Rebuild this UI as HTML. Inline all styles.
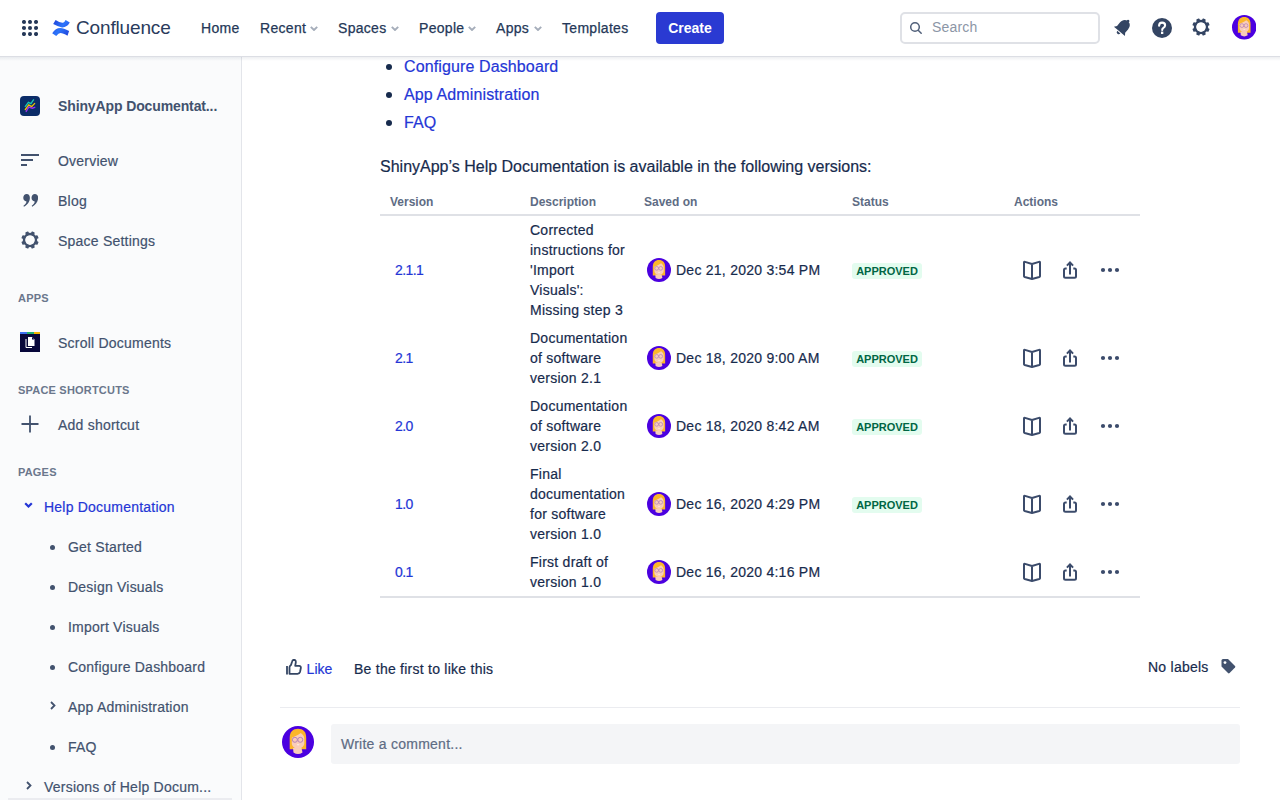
<!DOCTYPE html>
<html><head><meta charset="utf-8">
<style>
*{box-sizing:border-box;margin:0;padding:0}
html,body{width:1280px;height:800px;overflow:hidden;background:#fff;font-family:"Liberation Sans",sans-serif;color:#172b4d}
.abs{position:absolute}
#hdr{position:absolute;left:0;top:0;width:1280px;height:57px;background:#fff;border-bottom:1px solid #dcdee4;z-index:5}
#shd{position:absolute;left:0;top:57px;width:1280px;height:4px;background:linear-gradient(rgba(9,30,66,0.07),rgba(9,30,66,0));z-index:4}
.nav{position:absolute;top:0;height:56px;line-height:56px;font-size:14px;color:#253858;white-space:nowrap;letter-spacing:0.3px;-webkit-text-stroke:0.25px #253858}
.chev{position:absolute;top:26px}
#side{position:absolute;left:0;top:57px;width:242px;height:743px;background:#fafbfc;border-right:1px solid #e3e5ea}
.si{position:absolute;left:58px;font-size:14px;color:#42526e;white-space:nowrap;line-height:20px;letter-spacing:0.22px;-webkit-text-stroke:0.2px #42526e}
.sh{position:absolute;left:18px;font-size:11px;font-weight:bold;color:#6b778c;letter-spacing:0.2px;line-height:14px;margin-top:-1px}
.pg{position:absolute;left:68px;font-size:14px;color:#42526e;white-space:nowrap;line-height:20px;letter-spacing:0.22px;-webkit-text-stroke:0.2px #42526e}
.dot{position:absolute;left:49.7px;width:5px;height:5px;border-radius:50%;background:#42526e}
.lk{color:#2436d6 !important;-webkit-text-stroke-color:#2436d6 !important}
.vn{letter-spacing:-0.6px !important}
.dot2{position:absolute;left:386px;width:6px;height:6px;border-radius:3px;background:#172b4d}
.ml{position:absolute;left:404px;font-size:16px;line-height:24px;white-space:nowrap;letter-spacing:0.12px;-webkit-text-stroke:0.2px currentColor}
.th{position:absolute;font-size:12px;font-weight:bold;color:#5e6c84;line-height:16px;white-space:nowrap}
.td{position:absolute;font-size:14px;line-height:20px;color:#172b4d;white-space:nowrap;letter-spacing:0.25px;-webkit-text-stroke:0.2px currentColor}
.badge{position:absolute;width:70px;height:16px;background:#e3fcef;color:#006644;border-radius:3px;font-size:11px;font-weight:bold;line-height:16px;text-align:center}

</style></head><body>
<div id="hdr">
  <!-- grid icon -->
  <svg class="abs" style="left:22px;top:20px" width="16" height="16" viewBox="0 0 16 16"><g fill="#253858">
  <circle cx="2" cy="2" r="2.05"/><circle cx="8" cy="2" r="2.05"/><circle cx="14" cy="2" r="2.05"/>
  <circle cx="2" cy="8" r="2.05"/><circle cx="8" cy="8" r="2.05"/><circle cx="14" cy="8" r="2.05"/>
  <circle cx="2" cy="14" r="2.05"/><circle cx="8" cy="14" r="2.05"/><circle cx="14" cy="14" r="2.05"/></g></svg>
  <!-- confluence logo -->
  <svg class="abs" style="left:48px;top:14px" width="28" height="28" viewBox="48 14 28 28"><defs>
  <linearGradient id="lg1" x1="0" y1="0" x2="1" y2="0.4"><stop offset="0" stop-color="#1f3fd6"/><stop offset="0.75" stop-color="#2d75fb"/><stop offset="1" stop-color="#2a62ef"/></linearGradient>
  <linearGradient id="lg2" x1="1" y1="1" x2="0" y2="0.6"><stop offset="0" stop-color="#1f3fd6"/><stop offset="0.75" stop-color="#2d75fb"/><stop offset="1" stop-color="#2a62ef"/></linearGradient></defs>
  <path d="M55.6 20.0 Q61 23.6 63.5 22.6 Q64.5 22 65.6 20.0 L69.8 22.6 Q67 27.6 62 27.4 Q58.5 27 53.2 24.1 Z" fill="url(#lg1)"/>
  <path d="M52.2 33.3 Q55.5 28 60.3 28 Q63.5 28 69.1 31.1 L67.5 35.8 Q63 33 60.5 33 Q58.5 33.3 56.2 35.9 Z" fill="url(#lg2)"/>
  </svg>
  <div class="abs" style="left:76px;top:0;height:56px;line-height:56px;font-size:19px;color:#2a3b5c;letter-spacing:-0.15px">Confluence</div>
  <div class="nav" style="left:201px">Home</div>
  <div class="nav" style="left:260px">Recent <svg class="chev" style="left:50px" width="8" height="5" viewBox="0 0 8 5"><path d="M0.8 0.8 L4 4 L7.2 0.8" stroke="#a5adba" stroke-width="1.9" fill="none"/></svg></div>
  <div class="nav" style="left:338px">Spaces <svg class="chev" style="left:53px" width="8" height="5" viewBox="0 0 8 5"><path d="M0.8 0.8 L4 4 L7.2 0.8" stroke="#a5adba" stroke-width="1.9" fill="none"/></svg></div>
  <div class="nav" style="left:419px">People <svg class="chev" style="left:49px" width="8" height="5" viewBox="0 0 8 5"><path d="M0.8 0.8 L4 4 L7.2 0.8" stroke="#a5adba" stroke-width="1.9" fill="none"/></svg></div>
  <div class="nav" style="left:496px">Apps <svg class="chev" style="left:38px" width="8" height="5" viewBox="0 0 8 5"><path d="M0.8 0.8 L4 4 L7.2 0.8" stroke="#a5adba" stroke-width="1.9" fill="none"/></svg></div>
  <div class="nav" style="left:562px">Templates</div>
  <div class="abs" style="left:656px;top:12px;width:68px;height:32px;background:#2a3ad2;border-radius:4px;color:#fff;font-weight:bold;font-size:14px;line-height:32px;text-align:center">Create</div>
  <!-- search -->
  <div class="abs" style="left:900px;top:12px;width:200px;height:32px;border:2px solid #dfe1e6;border-radius:5px;background:#fff"></div>
  <svg class="abs" style="left:908px;top:20px" width="16" height="16" viewBox="0 0 16 16"><circle cx="7" cy="7" r="4.3" stroke="#505f79" stroke-width="1.5" fill="none"/><path d="M10.2 10.2 L13.2 13.2" stroke="#505f79" stroke-width="1.5" stroke-linecap="round"/></svg>
  <div class="abs" style="left:932px;top:12px;line-height:31px;font-size:14px;color:#8c96a6;letter-spacing:0.2px">Search</div>
  <svg class="abs" style="left:1112px;top:17.4px" width="21.2" height="21.2" viewBox="0 0 20 20"><g transform="rotate(40 10 10)" fill="#344563"><path d="M10 2.2 C13.3 2.2 15 4.7 15 8 V12.2 L16.8 14.6 H3.2 L5 12.2 V8 C5 4.7 6.7 2.2 10 2.2Z"/><path d="M8 15.6 H12 Q11.7 17.6 10 17.6 Q8.3 17.6 8 15.6Z"/><circle cx="10" cy="2" r="1.3"/></g></svg>
  <svg class="abs" style="left:1152px;top:18px" width="20" height="20" viewBox="0 0 20 20"><circle cx="10" cy="10" r="10" fill="#344563"/><path d="M7.1 7.8 Q7.1 4.6 10.1 4.6 Q13.1 4.6 13.1 7.3 Q13.1 8.9 11.4 9.9 Q10.2 10.6 10.2 12" stroke="#fff" stroke-width="2.1" fill="none" stroke-linecap="round"/><rect x="9" y="13.6" width="2.3" height="2.4" fill="#fff"/></svg>
  <svg class="abs" style="left:1191.4px;top:17.1px" width="20" height="20" viewBox="-10 -10 20 20"><g fill="#344563"><circle r="6.05" fill="none" stroke="#344563" stroke-width="2.35"/><rect x="-1.75" y="-8.7" width="3.5" height="3.6" rx="0.8" transform="rotate(22.5)"/><rect x="-1.75" y="-8.7" width="3.5" height="3.6" rx="0.8" transform="rotate(67.5)"/><rect x="-1.75" y="-8.7" width="3.5" height="3.6" rx="0.8" transform="rotate(112.5)"/><rect x="-1.75" y="-8.7" width="3.5" height="3.6" rx="0.8" transform="rotate(157.5)"/><rect x="-1.75" y="-8.7" width="3.5" height="3.6" rx="0.8" transform="rotate(202.5)"/><rect x="-1.75" y="-8.7" width="3.5" height="3.6" rx="0.8" transform="rotate(247.5)"/><rect x="-1.75" y="-8.7" width="3.5" height="3.6" rx="0.8" transform="rotate(292.5)"/><rect x="-1.75" y="-8.7" width="3.5" height="3.6" rx="0.8" transform="rotate(337.5)"/></g></svg>
  <svg class="abs" style="left:1231.75px;top:15.2px" width="24.5" height="24.5" viewBox="0 0 32 32"><circle cx="16" cy="16" r="16" fill="#4b00e0"/><path d="M7.7 12 C7.7 5.5 11 2.7 16 2.7 C21 2.7 24.2 5.5 24.2 12 V23.2 H7.7 Z" fill="#fbb62a"/><path d="M11 22 H19.5 L20.5 26.5 Q16 29.5 11.5 26.5 Z" fill="#f9cdb9"/><path d="M9.8 11.8 C11.5 11 15.5 9.5 18.7 7 C20.5 8 22.3 10 22.3 12.5 V17 C22.3 20.5 19.5 22.5 16 22.5 C12.5 22.5 9.8 20.5 9.8 17 Z" fill="#f9cdb9"/><circle cx="12.9" cy="13.8" r="2.5" stroke="#b07ab8" stroke-width="0.9" fill="none"/><circle cx="18.3" cy="13.8" r="2.5" stroke="#b07ab8" stroke-width="0.9" fill="none"/><path d="M14.6 18.6 Q16 20.2 17.6 18.6 Z" fill="#fff"/></svg>
</div>

<div id="shd"></div>
<div id="side">
  <!-- space icon -->
  <svg class="abs" style="left:20px;top:39px" width="20" height="20" viewBox="0 0 20 20"><rect width="20" height="20" rx="4" fill="#0b2c68"/>
  <path d="M5 10.9 L8.4 6.4 L10.9 7.6 L13.8 3.4" stroke="#19c8b0" stroke-width="1.3" fill="none"/>
  <path d="M5 14 L8.75 8.9 L11.6 10.6 L15 7.1" stroke="#f2c200" stroke-width="1.3" fill="none"/>
  <path d="M5.9 15.9 L8.75 11.1 L12.5 12.2 L15.3 11.2" stroke="#9b30f0" stroke-width="1.3" fill="none"/></svg>
  <div class="si" style="top:39px;font-weight:bold;color:#42526e;letter-spacing:-0.12px;-webkit-text-stroke:0">ShinyApp Documentat...</div>
  <!-- overview -->
  <svg class="abs" style="left:21px;top:97px" width="18" height="12" viewBox="0 0 18 12"><g fill="#42526e"><rect x="0" y="0" width="18" height="2"/><rect x="0" y="5" width="12" height="2"/><rect x="0" y="10" width="6" height="2"/></g></svg>
  <div class="si" style="top:94px">Overview</div>
  <svg class="abs" style="left:22.6px;top:136.8px" width="15.6" height="13.2" viewBox="0 0 17 14" preserveAspectRatio="none"><g fill="#42526e">
  <path d="M4 0 C6.2 0 7.5 1.6 7.5 4 C7.5 8 5 11.5 1 13.5 L0.5 12.5 C2.5 11.2 3.6 9.5 3.8 7.9 C1.7 7.8 0.3 6.3 0.3 4 C0.3 1.6 1.9 0 4 0Z"/>
  <path d="M13 0 C15.2 0 16.5 1.6 16.5 4 C16.5 8 14 11.5 10 13.5 L9.5 12.5 C11.5 11.2 12.6 9.5 12.8 7.9 C10.7 7.8 9.3 6.3 9.3 4 C9.3 1.6 10.9 0 13 0Z"/></g></svg>
  <div class="si" style="top:134px">Blog</div>
  <svg class="abs" style="left:19.7px;top:172.6px" width="20" height="20" viewBox="-10 -10 20 20"><g fill="#42526e"><circle r="6.05" fill="none" stroke="#42526e" stroke-width="2.35"/><rect x="-1.75" y="-8.7" width="3.5" height="3.6" rx="0.8" transform="rotate(22.5)"/><rect x="-1.75" y="-8.7" width="3.5" height="3.6" rx="0.8" transform="rotate(67.5)"/><rect x="-1.75" y="-8.7" width="3.5" height="3.6" rx="0.8" transform="rotate(112.5)"/><rect x="-1.75" y="-8.7" width="3.5" height="3.6" rx="0.8" transform="rotate(157.5)"/><rect x="-1.75" y="-8.7" width="3.5" height="3.6" rx="0.8" transform="rotate(202.5)"/><rect x="-1.75" y="-8.7" width="3.5" height="3.6" rx="0.8" transform="rotate(247.5)"/><rect x="-1.75" y="-8.7" width="3.5" height="3.6" rx="0.8" transform="rotate(292.5)"/><rect x="-1.75" y="-8.7" width="3.5" height="3.6" rx="0.8" transform="rotate(337.5)"/></g></svg>
  <div class="si" style="top:174px">Space Settings</div>
  <div class="sh" style="top:235px">APPS</div>
  <!-- scroll documents icon -->
  <svg class="abs" style="left:20px;top:275px" width="20" height="20" viewBox="0 0 20 20"><rect width="20" height="20" fill="#07073a"/>
  <rect x="0" y="0" width="7" height="2" fill="#3b6ff0"/><rect x="7" y="0" width="7" height="2" fill="#1fae6e"/><rect x="14" y="0" width="6" height="2" fill="#f2b600"/>
  <path d="M6 7 V15.5 H12" stroke="#fff" stroke-width="1" fill="none"/>
  <path d="M8 5 H12 L14.5 7.5 V14 H8 Z" fill="#fff"/><path d="M12 5 V7.5 H14.5" fill="#07073a"/></svg>
  <div class="si" style="top:276px">Scroll Documents</div>
  <div class="sh" style="top:327px">SPACE SHORTCUTS</div>
  <svg class="abs" style="left:21px;top:358px" width="18" height="18" viewBox="0 0 18 18"><path d="M9 0.5 V17.5 M0.5 9 H17.5" stroke="#42526e" stroke-width="1.8" fill="none"/></svg>
  <div class="si" style="top:358px">Add shortcut</div>
  <div class="sh" style="top:409px">PAGES</div>
  <svg class="abs" style="left:23.5px;top:445px" width="9" height="6" viewBox="0 0 9 6"><path d="M1.2 1.2 L4.5 4.5 L7.8 1.2" stroke="#2436d6" stroke-width="2.2" fill="none"/></svg>
  <div class="si lk" style="left:44px;top:440px">Help Documentation</div>
  <div class="dot" style="top:488px"></div><div class="pg" style="top:480px">Get Started</div>
  <div class="dot" style="top:528px"></div><div class="pg" style="top:520px">Design Visuals</div>
  <div class="dot" style="top:568px"></div><div class="pg" style="top:560px">Import Visuals</div>
  <div class="dot" style="top:608px"></div><div class="pg" style="top:600px">Configure Dashboard</div>
  <svg class="abs" style="left:49.5px;top:643.8px" width="6" height="9" viewBox="0 0 6 9"><path d="M1 1 L4.5 4.5 L1 8" stroke="#42526e" stroke-width="1.8" fill="none"/></svg>
  <div class="pg" style="top:640px">App Administration</div>
  <div class="dot" style="top:688px"></div><div class="pg" style="top:680px">FAQ</div>
  <svg class="abs" style="left:25.5px;top:723.6px" width="6" height="9" viewBox="0 0 6 9"><path d="M1 1 L4.5 4.5 L1 8" stroke="#42526e" stroke-width="1.8" fill="none"/></svg>
  <div class="si" style="left:44px;top:720px">Versions of Help Docum...</div>
  <div class="abs" style="left:8px;top:741px;width:224px;height:2px;background:#ebecf0"></div>
</div>

<div id="main">
<div class="dot2" style="top:64px"></div><div class="ml lk" style="top:55px">Configure Dashboard</div>
<div class="dot2" style="top:92px"></div><div class="ml lk" style="top:83px">App Administration</div>
<div class="dot2" style="top:120px"></div><div class="ml lk" style="top:111px">FAQ</div>
<div class="abs" style="left:380px;top:155px;font-size:16px;line-height:24px;color:#172b4d;white-space:nowrap;-webkit-text-stroke:0.2px #172b4d">ShinyApp’s Help Documentation is available in the following versions:</div>
<div class="th" style="left:390px;top:194px">Version</div>
<div class="th" style="left:530px;top:194px">Description</div>
<div class="th" style="left:644px;top:194px">Saved on</div>
<div class="th" style="left:852px;top:194px">Status</div>
<div class="th" style="left:1014px;top:194px">Actions</div>
<div class="abs" style="left:380px;top:214px;width:760px;height:2px;background:#dfe1e6"></div>
<div class="td lk vn" style="left:395px;top:260px">2.1.1</div>
<div class="td" style="left:530px;top:220px">Corrected<br>instructions for<br>'Import<br>Visuals':<br>Missing step 3</div>
<svg class="abs" style="left:647px;top:258px" width="24" height="24" viewBox="0 0 32 32"><circle cx="16" cy="16" r="16" fill="#4b00e0"/><path d="M7.7 12 C7.7 5.5 11 2.7 16 2.7 C21 2.7 24.2 5.5 24.2 12 V23.2 H7.7 Z" fill="#fbb62a"/><path d="M11 22 H19.5 L20.5 26.5 Q16 29.5 11.5 26.5 Z" fill="#f9cdb9"/><path d="M9.8 11.8 C11.5 11 15.5 9.5 18.7 7 C20.5 8 22.3 10 22.3 12.5 V17 C22.3 20.5 19.5 22.5 16 22.5 C12.5 22.5 9.8 20.5 9.8 17 Z" fill="#f9cdb9"/><circle cx="12.9" cy="13.8" r="2.5" stroke="#b07ab8" stroke-width="0.9" fill="none"/><circle cx="18.3" cy="13.8" r="2.5" stroke="#b07ab8" stroke-width="0.9" fill="none"/><path d="M14.6 18.6 Q16 20.2 17.6 18.6 Z" fill="#fff"/></svg>
<div class="td" style="left:676px;top:260px">Dec 21, 2020 3:54 PM</div>
<div class="badge" style="left:852px;top:263px">APPROVED</div>
<svg class="abs" style="left:1022px;top:260px" width="20" height="20" viewBox="0 0 20 20"><path d="M2 2.5 Q2 1.6 3 1.9 L10 4 L17 1.9 Q18 1.6 18 2.5 V16.2 Q18 16.8 17.3 17 L10 19 L2.7 17 Q2 16.8 2 16.2 Z M10 4 V19" stroke="#3b4b6b" stroke-width="2" fill="none" stroke-linejoin="round"/></svg>
<svg class="abs" style="left:1062px;top:260px" width="16" height="20" viewBox="0 0 16 20"><path d="M4.7 8.6 H3.5 Q2 8.6 2 10.1 V16.3 Q2 17.8 3.5 17.8 H12.5 Q14 17.8 14 16.3 V10.1 Q14 8.6 12.5 8.6 H11.3" stroke="#3b4b6b" stroke-width="2" fill="none"/><path d="M8 14.4 V2.6" stroke="#3b4b6b" stroke-width="2"/><path d="M4.9 5.6 L8 2.5 L11.1 5.6" stroke="#3b4b6b" stroke-width="2" fill="none"/></svg>
<svg class="abs" style="left:1100px;top:267px" width="20" height="6" viewBox="0 0 20 6"><g fill="#3b4b6b"><circle cx="3" cy="3" r="2.1"/><circle cx="10" cy="3" r="2.1"/><circle cx="17" cy="3" r="2.1"/></g></svg>
<div class="td lk vn" style="left:395px;top:348px">2.1</div>
<div class="td" style="left:530px;top:328px">Documentation<br>of software<br>version 2.1</div>
<svg class="abs" style="left:647px;top:346px" width="24" height="24" viewBox="0 0 32 32"><circle cx="16" cy="16" r="16" fill="#4b00e0"/><path d="M7.7 12 C7.7 5.5 11 2.7 16 2.7 C21 2.7 24.2 5.5 24.2 12 V23.2 H7.7 Z" fill="#fbb62a"/><path d="M11 22 H19.5 L20.5 26.5 Q16 29.5 11.5 26.5 Z" fill="#f9cdb9"/><path d="M9.8 11.8 C11.5 11 15.5 9.5 18.7 7 C20.5 8 22.3 10 22.3 12.5 V17 C22.3 20.5 19.5 22.5 16 22.5 C12.5 22.5 9.8 20.5 9.8 17 Z" fill="#f9cdb9"/><circle cx="12.9" cy="13.8" r="2.5" stroke="#b07ab8" stroke-width="0.9" fill="none"/><circle cx="18.3" cy="13.8" r="2.5" stroke="#b07ab8" stroke-width="0.9" fill="none"/><path d="M14.6 18.6 Q16 20.2 17.6 18.6 Z" fill="#fff"/></svg>
<div class="td" style="left:676px;top:348px">Dec 18, 2020 9:00 AM</div>
<div class="badge" style="left:852px;top:351px">APPROVED</div>
<svg class="abs" style="left:1022px;top:348px" width="20" height="20" viewBox="0 0 20 20"><path d="M2 2.5 Q2 1.6 3 1.9 L10 4 L17 1.9 Q18 1.6 18 2.5 V16.2 Q18 16.8 17.3 17 L10 19 L2.7 17 Q2 16.8 2 16.2 Z M10 4 V19" stroke="#3b4b6b" stroke-width="2" fill="none" stroke-linejoin="round"/></svg>
<svg class="abs" style="left:1062px;top:348px" width="16" height="20" viewBox="0 0 16 20"><path d="M4.7 8.6 H3.5 Q2 8.6 2 10.1 V16.3 Q2 17.8 3.5 17.8 H12.5 Q14 17.8 14 16.3 V10.1 Q14 8.6 12.5 8.6 H11.3" stroke="#3b4b6b" stroke-width="2" fill="none"/><path d="M8 14.4 V2.6" stroke="#3b4b6b" stroke-width="2"/><path d="M4.9 5.6 L8 2.5 L11.1 5.6" stroke="#3b4b6b" stroke-width="2" fill="none"/></svg>
<svg class="abs" style="left:1100px;top:355px" width="20" height="6" viewBox="0 0 20 6"><g fill="#3b4b6b"><circle cx="3" cy="3" r="2.1"/><circle cx="10" cy="3" r="2.1"/><circle cx="17" cy="3" r="2.1"/></g></svg>
<div class="td lk vn" style="left:395px;top:416px">2.0</div>
<div class="td" style="left:530px;top:396px">Documentation<br>of software<br>version 2.0</div>
<svg class="abs" style="left:647px;top:414px" width="24" height="24" viewBox="0 0 32 32"><circle cx="16" cy="16" r="16" fill="#4b00e0"/><path d="M7.7 12 C7.7 5.5 11 2.7 16 2.7 C21 2.7 24.2 5.5 24.2 12 V23.2 H7.7 Z" fill="#fbb62a"/><path d="M11 22 H19.5 L20.5 26.5 Q16 29.5 11.5 26.5 Z" fill="#f9cdb9"/><path d="M9.8 11.8 C11.5 11 15.5 9.5 18.7 7 C20.5 8 22.3 10 22.3 12.5 V17 C22.3 20.5 19.5 22.5 16 22.5 C12.5 22.5 9.8 20.5 9.8 17 Z" fill="#f9cdb9"/><circle cx="12.9" cy="13.8" r="2.5" stroke="#b07ab8" stroke-width="0.9" fill="none"/><circle cx="18.3" cy="13.8" r="2.5" stroke="#b07ab8" stroke-width="0.9" fill="none"/><path d="M14.6 18.6 Q16 20.2 17.6 18.6 Z" fill="#fff"/></svg>
<div class="td" style="left:676px;top:416px">Dec 18, 2020 8:42 AM</div>
<div class="badge" style="left:852px;top:419px">APPROVED</div>
<svg class="abs" style="left:1022px;top:416px" width="20" height="20" viewBox="0 0 20 20"><path d="M2 2.5 Q2 1.6 3 1.9 L10 4 L17 1.9 Q18 1.6 18 2.5 V16.2 Q18 16.8 17.3 17 L10 19 L2.7 17 Q2 16.8 2 16.2 Z M10 4 V19" stroke="#3b4b6b" stroke-width="2" fill="none" stroke-linejoin="round"/></svg>
<svg class="abs" style="left:1062px;top:416px" width="16" height="20" viewBox="0 0 16 20"><path d="M4.7 8.6 H3.5 Q2 8.6 2 10.1 V16.3 Q2 17.8 3.5 17.8 H12.5 Q14 17.8 14 16.3 V10.1 Q14 8.6 12.5 8.6 H11.3" stroke="#3b4b6b" stroke-width="2" fill="none"/><path d="M8 14.4 V2.6" stroke="#3b4b6b" stroke-width="2"/><path d="M4.9 5.6 L8 2.5 L11.1 5.6" stroke="#3b4b6b" stroke-width="2" fill="none"/></svg>
<svg class="abs" style="left:1100px;top:423px" width="20" height="6" viewBox="0 0 20 6"><g fill="#3b4b6b"><circle cx="3" cy="3" r="2.1"/><circle cx="10" cy="3" r="2.1"/><circle cx="17" cy="3" r="2.1"/></g></svg>
<div class="td lk vn" style="left:395px;top:494px">1.0</div>
<div class="td" style="left:530px;top:464px">Final<br>documentation<br>for software<br>version 1.0</div>
<svg class="abs" style="left:647px;top:492px" width="24" height="24" viewBox="0 0 32 32"><circle cx="16" cy="16" r="16" fill="#4b00e0"/><path d="M7.7 12 C7.7 5.5 11 2.7 16 2.7 C21 2.7 24.2 5.5 24.2 12 V23.2 H7.7 Z" fill="#fbb62a"/><path d="M11 22 H19.5 L20.5 26.5 Q16 29.5 11.5 26.5 Z" fill="#f9cdb9"/><path d="M9.8 11.8 C11.5 11 15.5 9.5 18.7 7 C20.5 8 22.3 10 22.3 12.5 V17 C22.3 20.5 19.5 22.5 16 22.5 C12.5 22.5 9.8 20.5 9.8 17 Z" fill="#f9cdb9"/><circle cx="12.9" cy="13.8" r="2.5" stroke="#b07ab8" stroke-width="0.9" fill="none"/><circle cx="18.3" cy="13.8" r="2.5" stroke="#b07ab8" stroke-width="0.9" fill="none"/><path d="M14.6 18.6 Q16 20.2 17.6 18.6 Z" fill="#fff"/></svg>
<div class="td" style="left:676px;top:494px">Dec 16, 2020 4:29 PM</div>
<div class="badge" style="left:852px;top:497px">APPROVED</div>
<svg class="abs" style="left:1022px;top:494px" width="20" height="20" viewBox="0 0 20 20"><path d="M2 2.5 Q2 1.6 3 1.9 L10 4 L17 1.9 Q18 1.6 18 2.5 V16.2 Q18 16.8 17.3 17 L10 19 L2.7 17 Q2 16.8 2 16.2 Z M10 4 V19" stroke="#3b4b6b" stroke-width="2" fill="none" stroke-linejoin="round"/></svg>
<svg class="abs" style="left:1062px;top:494px" width="16" height="20" viewBox="0 0 16 20"><path d="M4.7 8.6 H3.5 Q2 8.6 2 10.1 V16.3 Q2 17.8 3.5 17.8 H12.5 Q14 17.8 14 16.3 V10.1 Q14 8.6 12.5 8.6 H11.3" stroke="#3b4b6b" stroke-width="2" fill="none"/><path d="M8 14.4 V2.6" stroke="#3b4b6b" stroke-width="2"/><path d="M4.9 5.6 L8 2.5 L11.1 5.6" stroke="#3b4b6b" stroke-width="2" fill="none"/></svg>
<svg class="abs" style="left:1100px;top:501px" width="20" height="6" viewBox="0 0 20 6"><g fill="#3b4b6b"><circle cx="3" cy="3" r="2.1"/><circle cx="10" cy="3" r="2.1"/><circle cx="17" cy="3" r="2.1"/></g></svg>
<div class="td lk vn" style="left:395px;top:562px">0.1</div>
<div class="td" style="left:530px;top:552px">First draft of<br>version 1.0</div>
<svg class="abs" style="left:647px;top:560px" width="24" height="24" viewBox="0 0 32 32"><circle cx="16" cy="16" r="16" fill="#4b00e0"/><path d="M7.7 12 C7.7 5.5 11 2.7 16 2.7 C21 2.7 24.2 5.5 24.2 12 V23.2 H7.7 Z" fill="#fbb62a"/><path d="M11 22 H19.5 L20.5 26.5 Q16 29.5 11.5 26.5 Z" fill="#f9cdb9"/><path d="M9.8 11.8 C11.5 11 15.5 9.5 18.7 7 C20.5 8 22.3 10 22.3 12.5 V17 C22.3 20.5 19.5 22.5 16 22.5 C12.5 22.5 9.8 20.5 9.8 17 Z" fill="#f9cdb9"/><circle cx="12.9" cy="13.8" r="2.5" stroke="#b07ab8" stroke-width="0.9" fill="none"/><circle cx="18.3" cy="13.8" r="2.5" stroke="#b07ab8" stroke-width="0.9" fill="none"/><path d="M14.6 18.6 Q16 20.2 17.6 18.6 Z" fill="#fff"/></svg>
<div class="td" style="left:676px;top:562px">Dec 16, 2020 4:16 PM</div>
<svg class="abs" style="left:1022px;top:562px" width="20" height="20" viewBox="0 0 20 20"><path d="M2 2.5 Q2 1.6 3 1.9 L10 4 L17 1.9 Q18 1.6 18 2.5 V16.2 Q18 16.8 17.3 17 L10 19 L2.7 17 Q2 16.8 2 16.2 Z M10 4 V19" stroke="#3b4b6b" stroke-width="2" fill="none" stroke-linejoin="round"/></svg>
<svg class="abs" style="left:1062px;top:562px" width="16" height="20" viewBox="0 0 16 20"><path d="M4.7 8.6 H3.5 Q2 8.6 2 10.1 V16.3 Q2 17.8 3.5 17.8 H12.5 Q14 17.8 14 16.3 V10.1 Q14 8.6 12.5 8.6 H11.3" stroke="#3b4b6b" stroke-width="2" fill="none"/><path d="M8 14.4 V2.6" stroke="#3b4b6b" stroke-width="2"/><path d="M4.9 5.6 L8 2.5 L11.1 5.6" stroke="#3b4b6b" stroke-width="2" fill="none"/></svg>
<svg class="abs" style="left:1100px;top:569px" width="20" height="6" viewBox="0 0 20 6"><g fill="#3b4b6b"><circle cx="3" cy="3" r="2.1"/><circle cx="10" cy="3" r="2.1"/><circle cx="17" cy="3" r="2.1"/></g></svg>
<div class="abs" style="left:380px;top:596px;width:760px;height:2px;background:#dfe1e6"></div>
<svg class="abs" style="left:285px;top:659px" width="17" height="16" viewBox="0 0 17 16"><path d="M2 7 V15.5" stroke="#344563" stroke-width="1.8"/><path d="M4.5 14.8 H12.5 Q14.5 14.8 15 13 L15.8 9.3 Q16.2 6.8 14 6.8 H10.2 L10.8 3.3 Q11 0.9 8.9 0.8 Q7.6 0.8 7.2 2.2 L6 6 Q4.5 7.2 4.5 8.2 Z" stroke="#344563" stroke-width="1.8" fill="none" stroke-linejoin="round"/></svg>
<div class="td lk" style="left:306.6px;top:659px;letter-spacing:0">Like</div>
<div class="td" style="left:354px;top:659px">Be the first to like this</div>
<div class="td" style="left:1148px;top:657px">No labels</div>
<svg class="abs" style="left:1220px;top:658px" width="16" height="16" viewBox="0 0 16 16"><path d="M1.5 2.5 Q1.5 1 3 1 H8 L15 8 Q15.8 8.8 15 9.6 L9.6 15 Q8.8 15.8 8 15 L1.5 8.5 Z" fill="#42526e"/><circle cx="5" cy="4.6" r="1.4" fill="#fff"/></svg>
<div class="abs" style="left:280px;top:707px;width:960px;height:1px;background:#ebecf0"></div>
<svg class="abs" style="left:282px;top:726px" width="32" height="32" viewBox="0 0 32 32"><circle cx="16" cy="16" r="16" fill="#4b00e0"/><path d="M7.7 12 C7.7 5.5 11 2.7 16 2.7 C21 2.7 24.2 5.5 24.2 12 V23.2 H7.7 Z" fill="#fbb62a"/><path d="M11 22 H19.5 L20.5 26.5 Q16 29.5 11.5 26.5 Z" fill="#f9cdb9"/><path d="M9.8 11.8 C11.5 11 15.5 9.5 18.7 7 C20.5 8 22.3 10 22.3 12.5 V17 C22.3 20.5 19.5 22.5 16 22.5 C12.5 22.5 9.8 20.5 9.8 17 Z" fill="#f9cdb9"/><circle cx="12.9" cy="13.8" r="2.5" stroke="#b07ab8" stroke-width="0.9" fill="none"/><circle cx="18.3" cy="13.8" r="2.5" stroke="#b07ab8" stroke-width="0.9" fill="none"/><path d="M14.6 18.6 Q16 20.2 17.6 18.6 Z" fill="#fff"/></svg>
<div class="abs" style="left:331px;top:724px;width:909px;height:40px;background:#f4f5f7;border-radius:3px"></div>
<div class="td" style="left:341px;top:734px;color:#5e6c84">Write a comment...</div>
</div>
</body></html>
